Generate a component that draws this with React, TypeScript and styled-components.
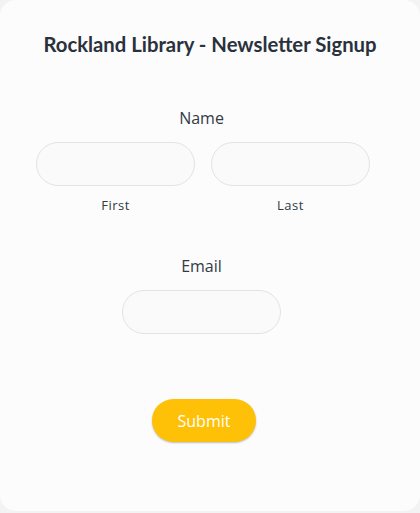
import React from "react";
import styled, { createGlobalStyle } from "styled-components";

const Global = createGlobalStyle`
  html, body { margin: 0; padding: 0; background: #f3f3f3; }
  * { box-sizing: border-box; }
`;

const Card = styled.div`
  width: 420px;
  height: 511px;
  background: #fcfcfc;
  border-radius: 16px;
  display: flex;
  flex-direction: column;
  align-items: center;
`;

const Title = styled.h1`
  margin: 31px 0 0;
  font-family: Lato, "Open Sans", sans-serif;
  font-weight: 700;
  font-size: 20.3px;
  line-height: 27px;
  color: #2a313c;
  text-align: center;
`;

const Form = styled.form`
  align-self: stretch;
  padding: 0 50px 0 33px;
  display: flex;
  flex-direction: column;
  align-items: center;
`;

const FieldLabel = styled.div<{ $top: number }>`
  margin-top: ${(p) => p.$top}px;
  font-family: "Open Sans", sans-serif;
  font-size: 16px;
  line-height: 22px;
  color: #333a44;
  text-align: center;
`;

const Row = styled.div`
  align-self: flex-end;
  margin-top: 13px;
  display: flex;
  gap: 16px;
`;

const Col = styled.div`
  display: flex;
  flex-direction: column;
  align-items: center;
`;

const Input = styled.input`
  width: 159px;
  height: 44px;
  border: 1px solid #e3e3e3;
  border-radius: 22px;
  background: #fafafa;
  outline: none;
  padding: 0 16px;
  font-family: "Open Sans", sans-serif;
  font-size: 15px;
`;

const SubLabel = styled.span`
  margin-top: 11px;
  font-family: "Open Sans", sans-serif;
  font-size: 13px;
  line-height: 16px;
  letter-spacing: 0.5px;
  color: #333a44;
`;

const EmailInput = styled(Input)`
  margin-top: 13px;
`;

const Submit = styled.button`
  margin: 65px 0 0 5px;
  width: 104px;
  height: 43px;
  border: none;
  border-radius: 22px;
  background: #ffc107;
  color: #ffffff;
  font-family: "Open Sans", sans-serif;
  font-size: 16px;
  box-shadow: 0 1px 2px rgba(0, 0, 0, 0.25);
  cursor: pointer;
`;

export default function App() {
  return (
    <>
      <Global />
      <Card>
        <Title>Rockland Library - Newsletter Signup</Title>
        <Form onSubmit={(e) => e.preventDefault()}>
          <FieldLabel $top={49}>Name</FieldLabel>
          <Row>
            <Col>
              <Input type="text" aria-label="First" />
              <SubLabel>First</SubLabel>
            </Col>
            <Col>
              <Input type="text" aria-label="Last" />
              <SubLabel>Last</SubLabel>
            </Col>
          </Row>
          <FieldLabel $top={42}>Email</FieldLabel>
          <EmailInput type="email" aria-label="Email" />
          <Submit type="submit">Submit</Submit>
        </Form>
      </Card>
    </>
  );
}
